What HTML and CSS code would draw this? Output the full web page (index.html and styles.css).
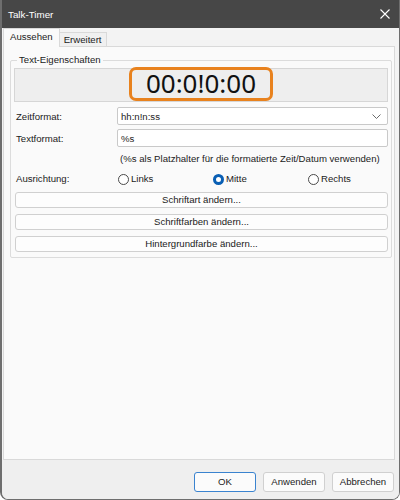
FILE: index.html
```html
<!DOCTYPE html>
<html lang="de">
<head>
    <meta charset="UTF-8">
    <meta name="viewport" content="width=device-width, initial-scale=1.0">
    <title>Talk-Timer</title>
    <link rel="stylesheet" href="styles.css">
</head>
<body>
    <div class="window">
        <div class="titlebar">
            <span class="title">Talk-Timer</span>
            <svg class="close" width="10" height="10" viewBox="0 0 10 10">
                <path d="M0.5 0.5 L9.5 9.5 M9.5 0.5 L0.5 9.5" stroke="#ffffff" stroke-width="1.1" fill="none"/>
            </svg>
        </div>

        <div class="tabs">
            <div class="tab active">Aussehen</div>
            <div class="tab">Erweitert</div>
        </div>

        <div class="panel">
            <fieldset class="group">
                <legend>Text-Eigenschaften</legend>

                <div class="preview">
                    <div class="clock">00:0!0:00</div>
                </div>

                <div class="form-row first">
                    <label>Zeitformat:</label>
                    <div class="select">
                        <span>hh:n!n:ss</span>
                        <svg width="9" height="5" viewBox="0 0 9 5">
                            <path d="M0.5 0.5 L4.5 4.5 L8.5 0.5" stroke="#6a6a6a" stroke-width="1" fill="none"/>
                        </svg>
                    </div>
                </div>

                <div class="form-row">
                    <label>Textformat:</label>
                    <div class="input">%s</div>
                </div>

                <div class="hint">(%s als Platzhalter für die formatierte Zeit/Datum verwenden)</div>

                <div class="form-row align-row">
                    <label>Ausrichtung:</label>
                    <div class="radios">
                        <span class="radio"><i class="dot"></i>Links</span>
                        <span class="radio"><i class="dot on"></i>Mitte</span>
                        <span class="radio"><i class="dot"></i>Rechts</span>
                    </div>
                </div>

                <div class="btn wide">Schriftart ändern...</div>
                <div class="btn wide">Schriftfarben ändern...</div>
                <div class="btn wide">Hintergrundfarbe ändern...</div>
            </fieldset>
        </div>

        <div class="footer">
            <div class="btn default">OK</div>
            <div class="btn">Anwenden</div>
            <div class="btn">Abbrechen</div>
        </div>
    </div>
</body>
</html>
```

FILE: styles.css
```css
* {
    box-sizing: border-box;
}

body {
    margin: 0;
    padding: 0;
    background-color: #ffffff;
    font-family: "Liberation Sans", Arial, sans-serif;
    font-size: 9.6px;
    color: #1b1b1b;
}

.window {
    width: 400px;
    height: 500px;
    border: 1px solid #6e6e6e;
    border-left-width: 2px;
    border-top: none;
    border-radius: 0 0 8px 8px;
    background-color: #f3f3f3;
    display: flex;
    flex-direction: column;
    overflow: hidden;
}

.titlebar {
    height: 28px;
    flex-shrink: 0;
    background-color: #474747;
    color: #ffffff;
    display: flex;
    align-items: center;
    justify-content: space-between;
    padding: 0 9px 0 6px;
    font-size: 9.8px;
}

.tabs {
    display: flex;
    align-items: flex-end;
    height: 18px;
    flex-shrink: 0;
    padding-left: 1px;
}

.tab {
    height: 14px;
    line-height: 13px;
    padding: 0 4px;
    border: 1px solid #d9d9d9;
    border-bottom: none;
    border-left: none;
    background-color: #f0f0f0;
}

.tab.active {
    height: 19px;
    line-height: 16px;
    background-color: #fafafa;
    border-left: 1px solid #d9d9d9;
    margin-bottom: -1px;
    position: relative;
    padding: 0 6px 0 6px;
}

.panel {
    height: 414px;
    flex-shrink: 0;
    margin: 0 4px 0 1px;
    border: 1px solid #d9d9d9;
    background-color: #fafafa;
    padding: 6px 2px 0 6px;
}

.group {
    margin: 0;
    padding: 1px 3px 5px 3px;
    border: 1px solid #dcdcdc;
    border-radius: 2px;
    min-width: 0;
}

.group legend {
    padding: 0 2px;
    margin-left: 3px;
    line-height: 14px;
}

.preview {
    height: 34px;
    background-color: #eeeeee;
    border: 1px solid #d6d6d6;
    display: flex;
    justify-content: center;
    align-items: center;
}

.clock {
    width: 144px;
    height: 34px;
    margin-top: -2px;
    border: 3px solid #e8821e;
    border-radius: 7px;
    font-family: "Noto Sans", "Open Sans", sans-serif;
    font-size: 26px;
    line-height: 27px;
    text-align: center;
    color: #111111;
}

.form-row {
    display: grid;
    grid-template-columns: 103px 1fr;
    align-items: center;
    margin-top: 4px;
}

.form-row.first {
    margin-top: 5px;
}

.form-row label {
    padding-left: 2px;
}

.select,
.input {
    height: 18px;
    border: 1px solid #c9c9c9;
    border-radius: 2px;
    background-color: #ffffff;
    padding: 0 6px 0 3px;
    display: flex;
    align-items: center;
    justify-content: space-between;
}

.hint {
    margin: 5px 0 0 106px;
    line-height: 14px;
    white-space: nowrap;
}

.align-row {
    margin-top: 6px;
    line-height: 14px;
}

.radios {
    display: flex;
    padding-left: 1px;
}

.radio {
    display: flex;
    align-items: center;
    width: 95px;
}

.dot {
    width: 11px;
    height: 11px;
    border: 1px solid #4a4a4a;
    border-radius: 50%;
    margin-right: 2px;
    background-color: #ffffff;
}

.dot.on {
    border: 3px solid #0a5fb4;
}

.btn {
    height: 16px;
    line-height: 14px;
    border: 1px solid #d0d0d0;
    border-radius: 3px;
    background-color: #fdfdfd;
    text-align: center;
}

.btn.wide {
    margin: 6px 0 0 1px;
}

.group .btn.wide:first-of-type {
    margin-top: 5px;
}

.footer {
    flex: 1;
    background-color: #efefef;
    display: flex;
    justify-content: flex-end;
    align-items: flex-start;
    gap: 7px;
    padding: 12px 5px 0 0;
}

.footer .btn {
    width: 62px;
    height: 20px;
    line-height: 18px;
    background-color: #fbfbfb;
}

.footer .btn.default {
    border-color: #3a83cf;
}
```
